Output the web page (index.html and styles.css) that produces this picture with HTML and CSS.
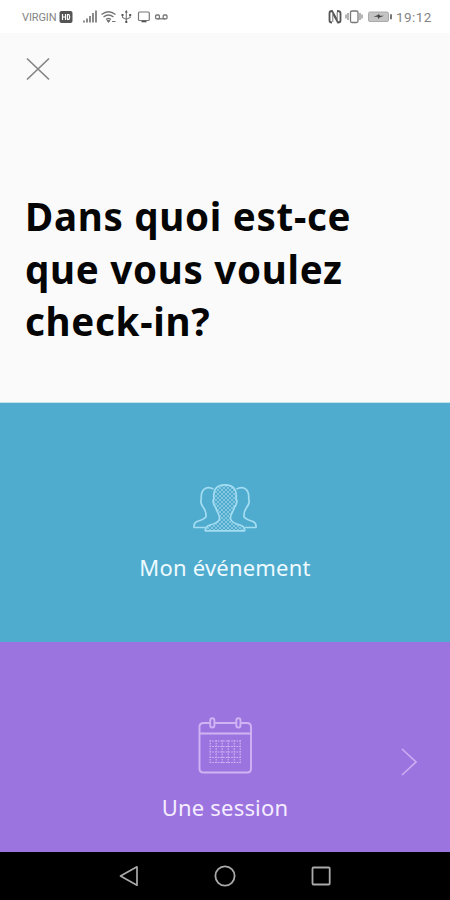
FILE: index.html
```html
<!DOCTYPE html>
<html lang="fr">
<head>
<meta charset="utf-8">
<title>Check-in</title>
<link rel="stylesheet" href="styles.css">
</head>
<body>
<div class="screen">
  <div class="status">
    <span class="carrier">VIRGIN</span>
    <svg class="status-left" width="112" height="18" viewBox="59 8 112 18" fill="none" stroke="#777">
      <rect x="59.5" y="11" width="13" height="12" rx="2" fill="#555" stroke="none"/>
      <path d="M62.5 14v6M65.500 14v6M62.500 17h3M67.500 14.500v5h1.500q1.500-2.500 0-5z" stroke="#fff" stroke-width="1.200"/>
      <path d="M84 20.500v2M87 18.500v4M90 16v6.500M93 13v9.500M96 10.500v12" stroke-width="1.700"/>
      <path d="M101.500 14.500q7-5.500 14 0M103.500 17q5-4 10 0M106 19.500q2.500-2 5 0" stroke-width="1.400"/>
      <path d="M107 20.500h3l-1.500 2zM112 21.500h3.500" fill="#777" stroke-width="1"/>
      <path d="M126.300 11v11M122.500 15v2.500l3.800 2 3.800-2V15" stroke-width="1.100"/>
      <path d="M126.300 10l-1.500 2.500h3zM121.500 14h2v2h-2zM129.200 14h2v2h-2zM125.300 21h2v2h-2z" fill="#555" stroke="none"/>
      <rect x="138.500" y="12" width="10.800" height="8.500" rx="1" stroke-width="1.200"/>
      <path d="M141.500 21.500h5" stroke="#555" stroke-width="1.600"/>
      <path d="M157.300 18.800h8" stroke-width="1.300"/>
      <rect x="155.600" y="15" width="3.800" height="3.800" rx="1" stroke-width="1.300"/>
      <rect x="163.200" y="15" width="3.800" height="3.800" rx="1" stroke-width="1.300"/>
    </svg>
    <svg class="status-right" width="66" height="18" viewBox="327 8 66 18" fill="none" stroke="#777">
      <path d="M332 22.500q-2.500 0-2.500-2v-7.500q0-2 2.500-2l4.500 8M337 11q3.500 0 3.500 2v7.500q0 2-2.500 2l-4.500-8" stroke="#555" stroke-width="1.800"/>
      <path d="M332.800 12v10M337.200 12v10" stroke-width="1"/>
      <rect x="350.500" y="11" width="7.500" height="11.500" rx="1.500" stroke-width="1.300"/>
      <path d="M348 13v7M346 14.500v4M360 13v7M362 14.500v4" stroke-width="1.100"/>
      <rect x="368.500" y="12" width="20" height="9.500" rx="1.500" fill="#c4c4c4" stroke="#aaa" stroke-width="1"/>
      <path d="M373.500 16.700l5-2v-1.200l1.500 2.300h4l-5 2v1.700l-1.500-2.800z" fill="#444" stroke="none"/>
      <path d="M391 14.300v5" stroke="#555" stroke-width="1.600"/>
    </svg>
    <span class="clock">19:12</span>
  </div>
  <header class="header">
    <svg class="close" width="24" height="24" viewBox="0 0 24 24" fill="none" stroke="#858585" stroke-width="1.700"><path d="M1 1.500l22 21M23 1.500l-22 21"/></svg>
    <h1 class="title">Dans quoi est-ce<br>que vous voulez<br>check-in?</h1>
  </header>
  <section class="choice event">
    <svg width="66" height="50" viewBox="192 483 66 50" fill="none" stroke="#a4ddf2" stroke-width="1.700" stroke-linejoin="round">
      <defs>
        <pattern id="mesh" width="4" height="4" patternUnits="userSpaceOnUse"><path d="M0 0l4 4M4 0l-4 4" stroke="#99d3e9" stroke-width=".7"/></pattern>
      </defs>
      <path d="M213.500 489C206 485 200.500 490 201.300 499C200 502 202 506 204 508.500Q206.500 512 206 517Q203 520 197 521.500Q193.500 523 194 527.500H205"/>
      <path d="M236.500 489C244 485 249.500 490 248.700 499C250 502 248 506 246 508.500Q243.500 512 244 517Q247 520 253 521.500Q256.500 523 256 527.500H245"/>
      <path d="M225 484.800C216.500 484.800 212.500 490 214 499C212.300 500 213.300 505 215.500 507C216.500 512 220 514 219.500 519Q218 523 210 525Q205 526.500 205.300 530.800H244.700Q245 526.500 240 525Q232 523 230.500 519C230 514 233.500 512 234.500 507C236.700 505 237.700 500 236 499C237.500 490 233.500 484.800 225 484.800Z" fill="url(#mesh)"/>
    </svg>
    <span class="label">Mon événement</span>
  </section>
  <section class="choice session">
    <svg width="56" height="60" viewBox="197 716 56 60" fill="none" stroke="#d0b3f3" stroke-width="1.900">
      <path d="M210 723h-6.500q-4 0-4 4v41.500q0 4 4 4h43.500q4 0 4-4V727q0-4-4-4h-6M214.500 723h21.500M199.500 733.500h51.500"/>
      <rect x="210.200" y="718.200" width="4.200" height="9.300" rx="2"/>
      <rect x="236.300" y="718.200" width="4.200" height="9.300" rx="2"/>
      <path d="M209.500 741h31.500M209.500 746.500h31.500M209.500 752h31.500M209.500 757.500h31.500M209.500 762.500h31.500M210.200 740v23M216.200 740v23M222.200 740v23M228.200 740v23M234.200 740v23M240.200 740v23" stroke-width="1.100" stroke-dasharray="1.700 1"/>
    </svg>
    <span class="label session-label">Une session</span>
    <svg class="chevron" width="18" height="30" viewBox="0 0 18 30" fill="none" stroke="#ccacf2" stroke-width="1.700"><path d="M2 2l14 13L2 28"/></svg>
  </section>
  <nav class="nav">
    <svg width="22" height="24" viewBox="0 0 22 24" fill="none" stroke="#aaa" stroke-width="1.700" stroke-linejoin="round"><path d="M2.500 12L19 2.800v18.400z"/></svg>
    <svg width="22" height="24" viewBox="0 0 22 24" fill="none" stroke="#aaa" stroke-width="1.800"><circle cx="11" cy="12" r="9.600"/></svg>
    <svg width="22" height="24" viewBox="0 0 22 24" fill="none" stroke="#aaa" stroke-width="1.800"><rect x="2.500" y="3.500" width="17.200" height="17" rx="1"/></svg>
  </nav>
</div>
</body>
</html>
```
FILE: styles.css
```css
* { box-sizing: border-box; }
body { margin: 0; }
svg { display: block; flex: none; }
.screen {
  width: 450px;
  height: 900px;
  display: flex;
  flex-direction: column;
  overflow: hidden;
  font-family: "Noto Sans", sans-serif;
}
.status {
  height: 33px;
  flex: none;
  display: flex;
  align-items: center;
  padding: 1px 18px 0 22px;
  background: #fff;
  color: #858585;
  font-family: Roboto, sans-serif;
}
.carrier { width: 37px; font-size: 11px; letter-spacing: -0.1px; white-space: nowrap; }
.status-right { margin-left: auto; }
.clock { width: 36px; margin-left: 3px; font-size: 13.500px; letter-spacing: 0.400px; white-space: nowrap; }
.header {
  height: 370px;
  flex: none;
  padding: 24px 25px 0;
  background: #fafafa;
  border-bottom: 1px solid #c4e3ed;
}
.close { margin-left: 1px; }
.title {
  margin: 109px 0 0;
  font-size: 38.500px;
  line-height: 52.700px;
  letter-spacing: 0.720px;
  font-weight: 700;
  color: #050505;
  white-space: nowrap;
}
.choice {
  flex: none;
  display: flex;
  flex-direction: column;
  align-items: center;
  position: relative;
}
.event { height: 239px; padding-top: 80px; background: #4facce; }
.session { height: 210px; padding-top: 74px; background: #9b74e0; }
.label {
  margin-top: 19px;
  font-size: 22px;
  line-height: 30px;
  letter-spacing: 0.200px;
  color: #eefaff;
  white-space: nowrap;
}
.session-label { margin-top: 16px; color: #f5edff; }
.chevron { position: absolute; right: 32px; top: 105px; }
.nav {
  height: 48px;
  flex: none;
  display: flex;
  justify-content: space-between;
  padding: 12px 118px 0;
  background: #000;
}
```
